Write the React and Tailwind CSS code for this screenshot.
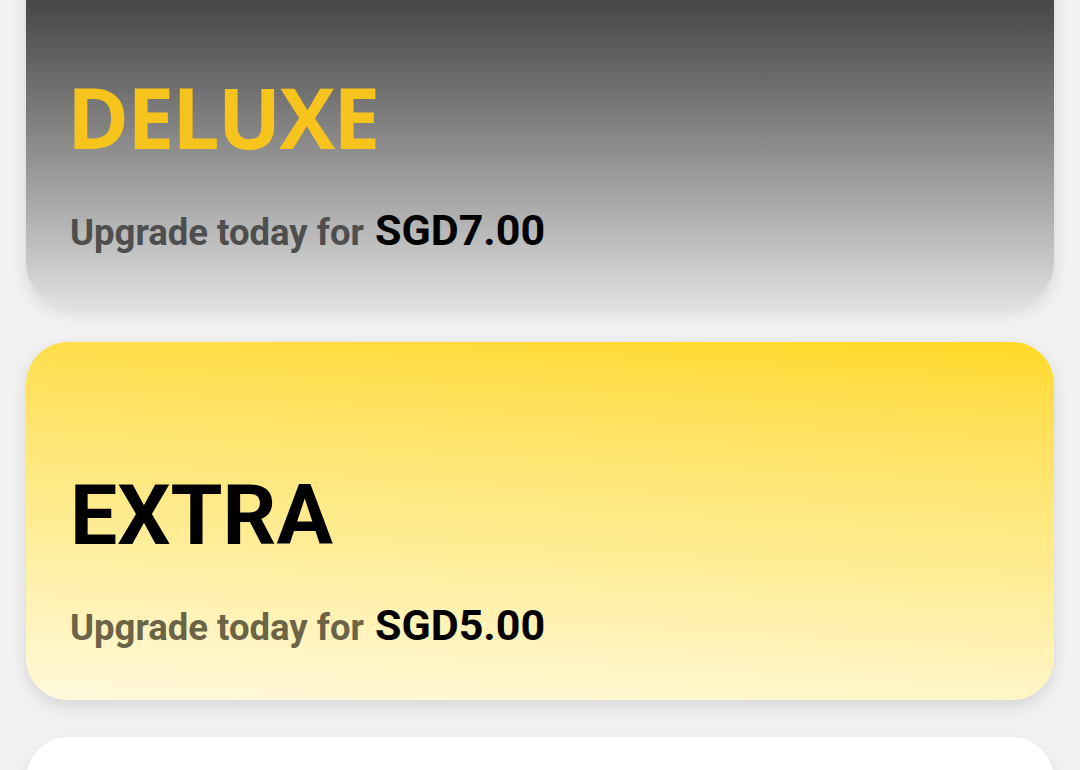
export default function App() {
  const plans = [
    {
      name: 'DELUXE',
      price: 'SGD7.00',
      card: 'bg-gradient-to-b from-[#303030] to-[#dfdfdf]',
      title: "text-[#f6c41c] font-['Open_Sans',sans-serif] leading-[76px] tracking-[-2px] -ml-[3px]",
      sub: 'text-[#4e4e4e]',
    },
    {
      name: 'EXTRA',
      price: 'SGD5.00',
      card: 'bg-linear-183 from-[#ffd91f] via-[#ffec90] via-55% to-[#fff9dc]',
      title: 'text-black leading-none',
      sub: 'text-[#6b6446]',
    },
  ];

  return (
    <div className="min-h-screen bg-[#f2f2f2] overflow-hidden font-['Roboto',sans-serif]">
      <div className="-mt-[53px] px-[26px] flex flex-col gap-[37px]">
        {plans.map((p) => (
          <div
            key={p.name}
            className={`${p.card} rounded-[42px] pl-[44px] pt-[132px] pb-[53px] shadow-[0_6px_18px_rgba(0,0,0,0.12)]`}
          >
            <h2 className={`${p.title} h-[84px] text-[84px] font-bold`}>{p.name}</h2>
            <p className={`${p.sub} mt-[46px] text-[36.5px] leading-none font-bold`}>
              Upgrade today for <span className="ml-[2px] text-black text-[43px]">{p.price}</span>
            </p>
          </div>
        ))}
        <div className="bg-white rounded-t-[42px] h-[200px] shadow-[0_6px_18px_rgba(0,0,0,0.08)]"></div>
      </div>
    </div>
  );
}
